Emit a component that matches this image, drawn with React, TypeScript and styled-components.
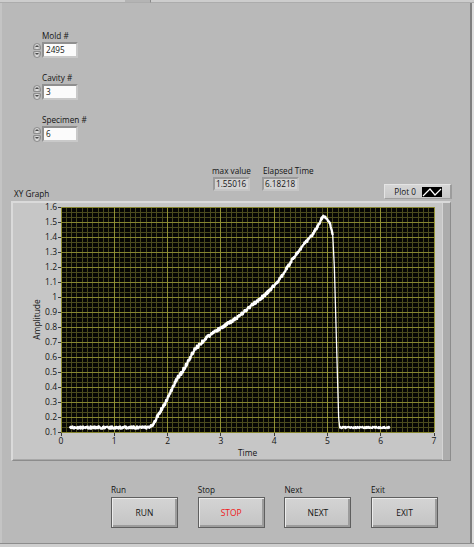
import React from 'react';
import styled, { createGlobalStyle } from 'styled-components';

const FONT = `"Open Sans", "Liberation Sans", sans-serif`;

const Global = createGlobalStyle`
  html, body { margin: 0; padding: 0; background: #b9b9b9; overflow: hidden; }
  * { box-sizing: border-box; }
`;

const Screen = styled.div`
  width: 474px;
  height: 547px;
  display: flex;
  flex-direction: column;
  background: #b9b9b9;
  font-family: ${FONT};
  color: #141414;
  overflow: hidden;
`;

const TopEdge = styled.div`
  height: 3px;
  flex: none;
  display: flex;
`;

const TopSeg = styled.div<{ $w?: number; $tone: string; $mark?: boolean }>`
  ${(p) => (p.$w ? `width:${p.$w}px; flex:none;` : 'flex:1;')}
  background: ${(p) => p.$tone};
  border-bottom: 1px solid #acacac;
  ${(p) => (p.$mark ? 'border-left: 1px solid #8a8a8a;' : '')}
`;

const Main = styled.div`
  flex: 1;
  display: flex;
  min-height: 0;
`;

const Panel = styled.div`
  flex: 1;
  display: flex;
  flex-direction: column;
  border-left: 2px solid #c4c4c4;
`;

const RightEdge = styled.div`
  width: 4px;
  flex: none;
  border-left: 2px solid #7f7f7f;
  background: #dedede;
`;

const BottomEdge = styled.div`
  height: 4px;
  flex: none;
  border-top: 1px solid #8c8c8c;
  background: #cecece;
`;

const Controls = styled.div`
  display: flex;
  flex-direction: column;
  gap: 14px;
  margin: 27px 0 0 31px;
`;

const Field = styled.div`
  display: flex;
  flex-direction: column;
  gap: 1px;
`;

const Label = styled.div<{ $indent?: number }>`
  font-size: 8.2px;
  line-height: 11px;
  height: 11px;
  white-space: nowrap;
  padding-left: ${(p) => p.$indent ?? 0}px;
`;

const NumRow = styled.div`
  display: flex;
  align-items: center;
  gap: 1px;
`;

const Spinner = styled.div`
  width: 8px;
  height: 15px;
  display: flex;
  flex-direction: column;
  gap: 1px;
`;

const SpinBtn = styled.div<{ $down?: boolean }>`
  flex: 1;
  display: flex;
  align-items: center;
  justify-content: center;
  border: 1px solid #8e8e8e;
  border-radius: ${(p) => (p.$down ? '1px 1px 4px 4px' : '4px 4px 1px 1px')};
  background: linear-gradient(90deg, #a8a8a8, #e6e6e6 50%, #a8a8a8);
  &::after {
    content: '';
    width: 0;
    height: 0;
    border-left: 2px solid transparent;
    border-right: 2px solid transparent;
    ${(p) => (p.$down ? 'border-top: 2px solid #4a4a4a;' : 'border-bottom: 2px solid #4a4a4a;')}
  }
`;

const NumBox = styled.div`
  width: 36px;
  height: 16px;
  background: #fbfbfb;
  border-style: solid;
  border-width: 2px;
  border-color: #8f8f8f #c9c9c9 #c9c9c9 #8f8f8f;
  font-size: 8.2px;
  line-height: 12px;
  padding-left: 2px;
`;

const HeaderRow = styled.div`
  display: grid;
  grid-template-columns: 210px 50px auto 1fr auto;
  align-items: end;
  height: 36px;
  margin-top: 23px;
  padding-right: 18px;
`;

const GraphTitle = styled.div`
  font-size: 8.2px;
  line-height: 11px;
  padding-left: 12px;
  margin-bottom: 2px;
`;

const Indicator = styled.div`
  display: flex;
  flex-direction: column;
  gap: 1px;
  margin-bottom: 10px;
`;

const IndBox = styled.div<{ $shift?: number }>`
  width: 37px;
  height: 14px;
  margin-left: ${(p) => p.$shift ?? 0}px;
  background: #d3d3d3;
  border-style: solid;
  border-width: 2px;
  border-color: #9a9a9a #c6c6c6 #c6c6c6 #9a9a9a;
  font-size: 8.2px;
  line-height: 10px;
  padding-left: 1px;
`;

const Legend = styled.div`
  grid-column: 5;
  width: 68px;
  height: 15px;
  margin-bottom: 2px;
  display: flex;
  align-items: center;
  justify-content: flex-end;
  gap: 6px;
  padding-right: 8px;
  background: linear-gradient(#d6d6d6, #c8c8c8);
  border-style: solid;
  border-width: 1px 2px 1px 1px;
  border-color: #e4e4e4 #9c9c9c #a0a0a0 #e4e4e4;
  font-size: 8.2px;
`;

const Swatch = styled.svg`
  width: 20px;
  height: 10px;
  background: #000;
  display: block;
`;

const GraphFrame = styled.div`
  width: 440px;
  height: 260px;
  margin-left: 9px;
  flex: none;
  background: #c6c6c6;
  border-style: solid;
  border-width: 2px 1px 1px 2px;
  border-color: #dadada #8c8c8c #8c8c8c #dadada;
  box-shadow: inset -7px 0 0 #acacac, inset -8px 0 0 #d4d4d4, inset 0 -1px 0 #a8a8a8;
`;

const Plot = styled.svg`
  display: block;
  width: 437px;
  height: 257px;
  overflow: visible;
  font-family: ${FONT};
`;

const ButtonRow = styled.div`
  display: grid;
  grid-template-columns: repeat(4, 67px);
  column-gap: 19.7px;
  margin: 23px 0 0 109px;
`;

const ButtonGroup = styled.div`
  display: flex;
  flex-direction: column;
  gap: 2px;
`;

const PanelButton = styled.div<{ $danger?: boolean }>`
  width: 67px;
  height: 31px;
  display: flex;
  align-items: center;
  justify-content: center;
  font-size: 8.5px;
  color: ${(p) => (p.$danger ? '#f01818' : '#141414')};
  background: linear-gradient(#d4d4d4, #c4c4c4);
  border: 1px solid #5f5f5f;
  box-shadow: inset 1px 1px 0 #ececec, inset -2px -2px 0 #9c9c9c;
`;

/* ---------- chart data ---------- */
const PX = 48;
const PY = 4;
const PW = 373;
const PH = 225;
const xp = (x: number) => PX + (x / 7) * PW;
const yp = (y: number) => PY + ((1.6 - y) / 1.5) * PH;

const KEY: [number, number][] = [
  [0.17, 0.13], [1.67, 0.13], [1.72, 0.15], [1.98, 0.31], [2.17, 0.45], [2.29, 0.51],
  [2.51, 0.65], [2.73, 0.73], [2.98, 0.79], [3.3, 0.86], [3.6, 0.95], [3.85, 1.02],
  [4.11, 1.12], [4.36, 1.26], [4.58, 1.36], [4.73, 1.42], [4.85, 1.49], [4.92, 1.54],
  [4.97, 1.53], [5.05, 1.49], [5.1, 1.41], [5.13, 1.2], [5.21, 0.2], [5.23, 0.13], [6.17, 0.13],
];

function base(x: number): number {
  for (let i = 0; i < KEY.length - 1; i++) {
    const [x0, y0] = KEY[i];
    const [x1, y1] = KEY[i + 1];
    if (x >= x0 && x <= x1) return y0 + ((x - x0) / (x1 - x0)) * (y1 - y0);
  }
  return 0.13;
}

function makeRnd(s: number) {
  let seed = s;
  return () => {
    seed = (seed * 1103515245 + 12345) & 0x7fffffff;
    return seed / 0x7fffffff;
  };
}

function segment(from: number, to: number, n: number, ampOf: (x: number) => number, seed: number): string {
  const rnd = makeRnd(seed);
  const parts: string[] = [];
  for (let i = 0; i <= n; i++) {
    const x = from + (i / n) * (to - from);
    const amp = ampOf(x);
    const y = base(x) + (rnd() - 0.5) * 2 * amp;
    parts.push(`${i === 0 ? 'M' : 'L'}${xp(x).toFixed(2)},${yp(y).toFixed(2)}`);
  }
  return parts.join(' ');
}

const RISE = segment(
  0.17,
  5.1,
  640,
  (x) => (x < 1.7 ? 0.008 : x < 2.6 ? 0.013 : x < 4.9 ? 0.01 : 0.004),
  987654
);
const DROP = segment(5.08, 5.24, 16, () => 0, 1);
const TAIL = segment(5.23, 6.17, 140, () => 0.006, 4242);

function Chart() {
  const minorV: number[] = [];
  const majorV: number[] = [];
  for (let i = 0; i <= 70; i++) (i % 10 === 0 ? majorV : minorV).push(xp(i / 10));
  const minorH: number[] = [];
  const majorH: number[] = [];
  for (let i = 0; i <= 45; i++) (i % 3 === 0 ? majorH : minorH).push(PY + (i / 45) * PH);
  const yTicks = Array.from({ length: 16 }, (_, i) => 0.1 + i * 0.1);
  const xTicks = Array.from({ length: 8 }, (_, i) => i);
  return (
    <Plot viewBox="0 0 437 257">
      <rect x={PX} y={PY} width={PW} height={PH} fill="#060604" />
      <g shapeRendering="crispEdges" strokeWidth={1}>
        {minorV.map((x) => (
          <line key={`mv${x}`} x1={x} x2={x} y1={PY} y2={PY + PH} stroke="#4a4a1e" />
        ))}
        {minorH.map((y) => (
          <line key={`mh${y}`} x1={PX} x2={PX + PW} y1={y} y2={y} stroke="#4a4a1e" />
        ))}
        {majorH.map((y) => (
          <line key={`Mh${y}`} x1={PX} x2={PX + PW} y1={y} y2={y} stroke="#85852f" />
        ))}
        {majorV.map((x) => (
          <line key={`Mv${x}`} x1={x} x2={x} y1={PY} y2={PY + PH} stroke="#909034" />
        ))}
      </g>
      <path d={RISE} fill="none" stroke="#ffffff" strokeWidth={2.3} strokeLinejoin="round" />
      <path d={DROP} fill="none" stroke="#ffffff" strokeWidth={1.3} />
      <path d={TAIL} fill="none" stroke="#ffffff" strokeWidth={1.8} strokeLinejoin="round" />
      <g shapeRendering="crispEdges" stroke="#3a3a3a">
        {yTicks.map((v) => (
          <line key={`yt${v}`} x1={PX - 3} x2={PX} y1={yp(v)} y2={yp(v)} />
        ))}
        {xTicks.map((v) => (
          <line key={`xt${v}`} x1={xp(v)} x2={xp(v)} y1={PY + PH + 1} y2={PY + PH + 4} />
        ))}
      </g>
      <g fontSize={8.5} fill="#141414">
        {yTicks.map((v) => (
          <text key={`yl${v}`} x={PX - 4} y={yp(v) + 3} textAnchor="end">
            {Math.abs(v - 1) < 1e-6 ? '1' : v.toFixed(1)}
          </text>
        ))}
        {xTicks.map((v) => (
          <text key={`xl${v}`} x={xp(v)} y={PY + PH + 12} textAnchor="middle">
            {v}
          </text>
        ))}
      </g>
      <text x={PX + PW / 2} y={253} fontSize={8.4} textAnchor="middle" fill="#141414">
        Time
      </text>
      <text
        transform={`translate(27,${PY + PH / 2}) rotate(-90)`}
        fontSize={8.4}
        textAnchor="middle"
        fill="#141414"
      >
        Amplitude
      </text>
    </Plot>
  );
}

function NumericControl({ label, value }: { label: string; value: string }) {
  return (
    <Field>
      <Label $indent={9}>{label}</Label>
      <NumRow>
        <Spinner>
          <SpinBtn />
          <SpinBtn $down />
        </Spinner>
        <NumBox>{value}</NumBox>
      </NumRow>
    </Field>
  );
}

const buttons = [
  { label: 'Run', text: 'RUN' },
  { label: 'Stop', text: 'STOP', danger: true },
  { label: 'Next', text: 'NEXT' },
  { label: 'Exit', text: 'EXIT' },
];

export default function App() {
  return (
    <Screen>
      <Global />
      <TopEdge>
        <TopSeg $w={125} $tone="#cdcdcd" />
        <TopSeg $w={25} $tone="#b4b4b4" />
        <TopSeg $tone="#cdcdcd" $mark />
      </TopEdge>
      <Main>
        <Panel>
          <Controls>
            <NumericControl label="Mold #" value="2495" />
            <NumericControl label="Cavity #" value="3" />
            <NumericControl label="Specimen #" value="6" />
          </Controls>
          <HeaderRow>
            <GraphTitle>XY Graph</GraphTitle>
            <Indicator>
              <Label>max value</Label>
              <IndBox $shift={1}>1.55016</IndBox>
            </Indicator>
            <Indicator>
              <Label $indent={1}>Elapsed Time</Label>
              <IndBox>6.18218</IndBox>
            </Indicator>
            <Legend>
              <span>Plot 0</span>
              <Swatch viewBox="0 0 20 10">
                <polyline points="1,9 8,2 13,8 19,2" fill="none" stroke="#fff" strokeWidth={1.2} />
              </Swatch>
            </Legend>
          </HeaderRow>
          <GraphFrame>
            <Chart />
          </GraphFrame>
          <ButtonRow>
            {buttons.map((b) => (
              <ButtonGroup key={b.text}>
                <Label>{b.label}</Label>
                <PanelButton $danger={b.danger}>{b.text}</PanelButton>
              </ButtonGroup>
            ))}
          </ButtonRow>
        </Panel>
        <RightEdge />
      </Main>
      <BottomEdge />
    </Screen>
  );
}
